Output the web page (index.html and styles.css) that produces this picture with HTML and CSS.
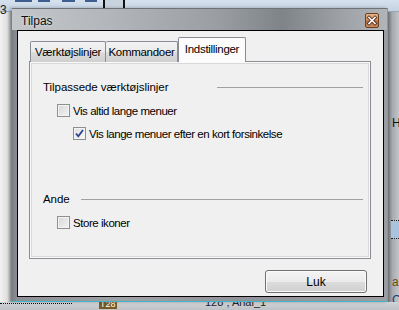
FILE: index.html
```html
<!DOCTYPE html>
<html>
<head>
<meta charset="utf-8">
<link rel="stylesheet" href="styles.css">
</head>
<body>
<div class="desk">
  <div class="dtop">
    <span class="d3">3</span>
    <i class="dash d1"></i><i class="dash d2"></i><i class="dash d3b"></i><i class="dash d4"></i>
    <i class="sq"></i>
  </div>
  <div class="dmid">
    <div class="dleft"></div>
    <div class="dcenter"></div>
    <div class="dright">
      <span class="rt rt-h">H</span>
      <span class="rsel"></span>
      <span class="rt rt-a">a</span>
      <span class="rt rt-c">C</span>
    </div>
  </div>
  <div class="dbot">
    <span class="dots"></span>
    <span class="bicon">T28</span>
    <span class="btxt">128 ; Arial_1</span>
  </div>
</div>

<div class="window">
  <div class="titlebar">
    <span class="title">Tilpas</span>
    <span class="close"><svg width="14" height="15" viewBox="0 0 14 15"><path d="M4 4.5 L10 10.5 M10 4.5 L4 10.5" stroke="#4a2a18" stroke-width="3.2" stroke-linecap="square"/><path d="M4 4.5 L10 10.5 M10 4.5 L4 10.5" stroke="#fff" stroke-width="1.6" stroke-linecap="square"/></svg></span>
  </div>
  <div class="client">
    <div class="tabs">
      <div class="tab t1">Værktøjslinjer</div>
      <div class="tab t2">Kommandoer</div>
      <div class="tab sel">Indstillinger</div>
    </div>
    <div class="panel">
      <div class="hdr hdr1"><span class="lbl lbl1">Tilpassede værktøjslinjer</span><span class="rule"></span></div>
      <div class="row r1"><span class="cb"></span><span>Vis altid lange menuer</span></div>
      <div class="row r2"><span class="cb on"><svg width="11" height="11" viewBox="0 0 11 11"><path d="M2 5.5 L4.3 8.3 L9 2" fill="none" stroke="#2d4591" stroke-width="1.8"/></svg></span><span>Vis lange menuer efter en kort forsinkelse</span></div>
      <div class="hdr hdr2"><span class="lbl lbl2">Ande</span><span class="rule"></span></div>
      <div class="row r3"><span class="cb"></span><span>Store ikoner</span></div>
    </div>
    <div class="foot"><span class="btn">Luk</span></div>
  </div>
</div>
</body>
</html>
```
FILE: styles.css
```css
* { box-sizing: border-box; }
html, body { margin: 0; padding: 0; }
body {
  width: 399px;
  height: 310px;
  overflow: hidden;
  position: relative;
  font-family: "Liberation Sans", Arial, sans-serif;
  font-size: 11px;
  color: #000;
  background: #dfe2e6;
}

/* desktop underneath */
.desk { width: 399px; height: 310px; display: flex; flex-direction: column; }
.dtop {
  height: 12px;
  position: relative;
  background: linear-gradient(#d6e1ee, #c4d2e2);
  border-bottom: 1px solid #9aa6b4;
}
.d3 { position: absolute; left: 0; top: 3px; font-size: 12px; color: #222; }
.dash { position: absolute; top: 0; height: 2px; background: #3d5e8e; }
.d1 { left: 15px; width: 17px; }
.d2 { left: 38px; width: 12px; }
.d3b { left: 62px; width: 13px; }
.d4 { left: 85px; width: 12px; }
.sq { position: absolute; left: 103px; top: 0; width: 22px; height: 13px; border: 2px solid #111; border-top: 0; background: #c9d3de; }
.dmid { flex: 1; display: flex; }
.dleft { width: 12px; background: linear-gradient(90deg, #f2f2f2, #dedede 60%, #9a9a9a); }
.dcenter { flex: 1; background: #e6e6e6; }
.dright { width: 11px; position: relative; background: linear-gradient(90deg, #6c6f74, #a7abb0 40%, #c2c6cb); }
.rt { position: absolute; left: 4px; font-size: 12px; color: #111; }
.rt-h { top: 104px; }
.rt-a { top: 263px; color: #7a4a00; }
.rt-c { top: 281px; color: #1a3a7a; }
.rsel { position: absolute; left: 3px; top: 208px; width: 8px; height: 19px; background: #a9c2dd; border-top: 1px dotted #222; border-bottom: 1px dotted #222; }
.dbot { height: 8px; position: relative; background: linear-gradient(#d2d4d7, #bfc2c6); }
.dots { position: absolute; left: 0; top: 1px; width: 72px; border-top: 1px dotted #111; }
.bicon { position: absolute; left: 99px; top: -2px; font-size: 9px; background: #7a5a20; color: #fff; padding: 0 1px; line-height: 9px; }
.btxt { position: absolute; left: 205px; top: -6px; font-size: 11px; color: #222; }

/* window */
.window {
  position: absolute;
  left: 12px;
  top: 8px;
  width: 376px;
  height: 294px;
  padding: 0 3px 4px 5px;
  display: flex;
  flex-direction: column;
  background: linear-gradient(90deg, #7b7f85 0px, #8c9096 5px, #9ea2a7 30%, #8f9399 60%, #9a9ea3 100%);
  border-right: 1px solid #40b4c8;
  border-bottom: 1px solid #40b4c8;
  box-shadow: -2px 0 3px rgba(0,0,0,0.25);
}
.titlebar {
  height: 22px;
  margin: 0 -3px 0 -5px;
  padding: 0 8px 0 9px;
  display: flex;
  align-items: flex-start;
  justify-content: space-between;
  background: linear-gradient(90deg, #c4c7ca 0%, #b3b7bb 25%, #9a9ea3 55%, #7f8489 72%, #9ea2a7 88%, #b1b5b9 100%);
  border-top: 1px solid #6f7378;
}
.title { font-size: 12px; line-height: 12px; margin-top: 6px; color: #101010; text-shadow: 0 0 3px #e8eaec; }
.close {
  margin-top: 4px;
  width: 14px;
  height: 15px;
  border: 1px solid #6a4020;
  border-radius: 2px;
  background: linear-gradient(#e6b58a, #d0905e 45%, #b66a38 55%, #c98a5c);
  display: flex;
}
.close svg { margin: -1px; }

.client {
  flex: 1;
  border: 1px solid #000;
  background: #f0f0f0;
  padding: 6px 16px 3px 11px;
  display: flex;
  flex-direction: column;
}
.tabs { height: 24px; display: flex; align-items: flex-end; padding-left: 1px; position: relative; z-index: 1; }
.tab {
  height: 21px;
  margin-bottom: -1px;
  border: 1px solid #898c95;
  border-bottom: 0;
  border-radius: 2px 2px 0 0;
  background: linear-gradient(#f2f2f2, #ebebeb 50%, #dddddd 50%, #cfcfcf);
  padding-top: 4px;
  text-align: center;
  font-size: 11.5px;
  letter-spacing: -0.3px;
}
.t1 { width: 76px; }
.t2 { width: 72px; border-left: 0; }
.sel { width: 68px; height: 25px; background: #fcfcfc; padding-top: 5px; margin-left: 0; }
.panel {
  height: 198px;
  margin-right: -4px;
  border: 1px solid #898c95;
  background: #f0f0f0;
  box-shadow: inset 0 0 0 1px #fafafa, inset 0 0 0 2px #d9d9d9;
  padding: 17px 7px 0 13px;
  display: flex;
  flex-direction: column;
}
.hdr { height: 15px; display: flex; align-items: center; font-size: 11.5px; letter-spacing: -0.05px; }
.lbl1 { width: 174px; }
.lbl2 { width: 38px; }
.rule { flex: 1; height: 1px; background: #a0a0a0; margin-top: 1px; }
.hdr2 { margin-top: 51px; }
.row { height: 13px; display: flex; align-items: center; margin-top: 10px; font-size: 11.5px; letter-spacing: -0.45px; }
.r1, .r3 { padding-left: 14px; }
.r2 { padding-left: 30px; }
.cb {
  width: 13px;
  height: 13px;
  margin-right: 3px;
  border: 1px solid #8f8f8f;
  background: linear-gradient(135deg, #d6d6d6, #f4f4f4);
  box-shadow: inset 0 0 0 1px #f4f4f4;
  display: flex;
  align-items: center;
  justify-content: center;
  flex: none;
}
.cb.on { background: linear-gradient(135deg, #dedede, #fafafa); }
.foot { display: flex; justify-content: flex-end; margin-top: 11px; }
.btn {
  width: 102px;
  height: 23px;
  border: 1px solid #707070;
  border-radius: 3px;
  background: linear-gradient(#f3f3f3, #ebebeb 50%, #dddddd 50%, #cfcfcf);
  box-shadow: inset 0 0 0 1px #fbfbfb;
  display: flex;
  align-items: center;
  justify-content: center;
  font-size: 12px;
}
```
